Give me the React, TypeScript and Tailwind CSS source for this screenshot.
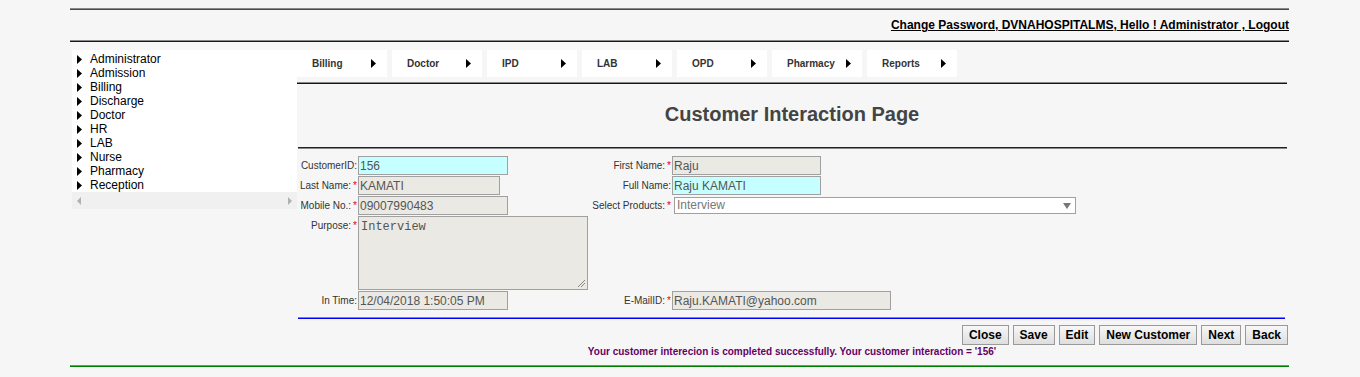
import React from 'react';

const sideItems = ['Administrator', 'Admission', 'Billing', 'Discharge', 'Doctor', 'HR', 'LAB', 'Nurse', 'Pharmacy', 'Reception'];
const menuItems = ['Billing', 'Doctor', 'IPD', 'LAB', 'OPD', 'Pharmacy', 'Reports'];
const buttons = ['Close', 'Save', 'Edit', 'New Customer', 'Next', 'Back'];

const Arrow: React.FC<{ className?: string }> = ({ className }) => (
  <svg width="5" height="9" viewBox="0 0 5 9" className={className}>
    <polygon points="0,0 5,4.5 0,9" fill="#000" />
  </svg>
);

const Star = () => <span className="text-[#e00] ml-[2px]">*</span>;

const Label: React.FC<{ text: string; req?: boolean }> = ({ text, req }) => (
  <div className="text-right text-[10px] text-[#333] leading-[12px] pt-[4px] pr-[1px] whitespace-nowrap">
    {text}
    {req && <Star />}
  </div>
);

const Field: React.FC<{ value: string; w: string; cyan?: boolean }> = ({ value, w, cyan }) => (
  <div
    className={`${w} h-[19px] border border-[#a0a0a0] ${cyan ? 'bg-[#c6ffff]' : 'bg-[#ebe9e3]'} text-[12px] leading-[18px] text-[#555] px-[1px] overflow-hidden whitespace-nowrap`}
  >
    {value}
  </div>
);

const App: React.FC = () => {
  return (
    <div className="min-h-[377px] bg-[#f6f6f6] pt-[8px]" style={{ fontFamily: '"Liberation Sans", Arial, sans-serif' }}>
      <div className="ml-[70px] w-[1219px]">
        {/* Header */}
        <div className="border-t border-[#888] border-b border-b-[#008000] h-[2px]" />
        <div className="h-[30px] flex items-center justify-end">
          <span className="text-[12px] font-bold text-black underline leading-[14px]">
            Change Password<span className="no-underline">,</span> DVNAHOSPITALMS<span className="no-underline">,</span> Hello ! Administrator , Logout
          </span>
        </div>
        <div className="border-t border-[#888] border-b border-b-[#0000c0] h-[2px]" />

        <div className="flex mt-[8px]">
          {/* Sidebar */}
          <div className="w-[225px] shrink-0 ml-[2px]">
            <div className="bg-white pt-[2px]">
              {sideItems.map((s) => (
                <div key={s} className="flex items-center h-[14px] pl-[5px]">
                  <Arrow className="mr-[8px]" />
                  <span className="text-[12px] text-black leading-[14px]">{s}</span>
                </div>
              ))}
              <div className="h-[17px] bg-[#f0f0f0] flex items-center justify-between px-[5px]">
                <svg width="4" height="8" viewBox="0 0 4 8"><polygon points="4,0 0,4 4,8" fill="#b0b0b0" /></svg>
                <svg width="4" height="8" viewBox="0 0 4 8"><polygon points="0,0 4,4 0,8" fill="#b0b0b0" /></svg>
              </div>
            </div>
          </div>

          {/* Main */}
          <div className="w-[990px]">
            <div className="flex gap-[5px]">
              {menuItems.map((m) => (
                <div key={m} className="w-[90px] h-[27px] bg-white flex items-center justify-between pl-[15px] pr-[11px]">
                  <span className="text-[10px] font-bold text-[#333]">{m}</span>
                  <Arrow />
                </div>
              ))}
            </div>
            <div className="mt-[5px] border-t border-[#888] border-b border-b-[#0000c0] h-[2px]" />

            <div className="h-[63px] flex items-center justify-center">
              <h1 className="text-[20px] font-bold text-[#444] mb-[3px]">Customer Interaction Page</h1>
            </div>
            <div className="h-[2px] border-t border-[#222] border-b border-b-[#888] ml-[1px]" />

            {/* Form */}
            <div className="grid grid-cols-[60px_232px_82px_1fr] gap-y-[1px] mt-[7px] ml-[1px]">
              <Label text="CustomerID:" />
              <Field value="156" w="w-[150px]" cyan />
              <Label text="First Name:" req />
              <Field value="Raju" w="w-[149px]" />

              <Label text="Last Name:" req />
              <Field value="KAMATI" w="w-[142px]" />
              <Label text="Full Name:" />
              <Field value="Raju KAMATI" w="w-[149px]" cyan />

              <Label text="Mobile No.:" req />
              <Field value="09007990483" w="w-[150px]" />
              <Label text="Select Products:" req />
              <div className="w-[402px] h-[17px] mt-[1px] ml-[2px] border border-[#a0a0a0] bg-white flex items-center justify-between pl-[2px] pr-[4px]">
                <span className="text-[12px] text-[#777] leading-[15px]">Interview</span>
                <svg width="8" height="6" viewBox="0 0 8 6"><polygon points="0,0 8,0 4,6" fill="#777" /></svg>
              </div>

              <Label text="Purpose:" req />
              <div className="relative w-[230px] h-[74px] border border-[#a0a0a0] bg-[#ebe9e3] px-[2px] pt-[3px] text-[12px] leading-[14px] text-[#555]" style={{ fontFamily: '"Liberation Mono", "DejaVu Sans Mono", monospace' }}>
                Interview
                <svg width="7" height="7" viewBox="0 0 7 7" className="absolute right-[2px] bottom-[2px]">
                  <line x1="7" y1="0" x2="0" y2="7" stroke="#888" />
                  <line x1="7" y1="3" x2="3" y2="7" stroke="#888" />
                </svg>
              </div>
              <div />
              <div />

              <Label text="In Time:" />
              <Field value="12/04/2018 1:50:05 PM" w="w-[150px]" />
              <Label text="E-MailID:" req />
              <Field value="Raju.KAMATI@yahoo.com" w="w-[219px]" />
            </div>

            <div className="mt-[7px] ml-[1px] mr-[2px] h-[2px] border-t border-[#888] border-b border-b-[#0000ff]" />

            <div className="flex justify-end gap-[4px] mt-[6px] mr-[-1px]">
              {buttons.map((b) => (
                <div key={b} className="h-[20px] px-[6px] border border-[#999] bg-gradient-to-b from-[#f7f7f7] to-[#dedede] text-[12px] font-bold text-black flex items-center leading-none">
                  {b}
                </div>
              ))}
            </div>
            <div className="text-center text-[10px] font-bold text-[#660066] mt-[1px] leading-[12px]">
              Your customer interecion is completed successfully. Your customer interaction = '156'
            </div>
          </div>
        </div>

        <div className="mt-[7px] border-t border-[#888] border-b border-b-[#008000] h-[2px]" />
      </div>
    </div>
  );
};

export default App;
